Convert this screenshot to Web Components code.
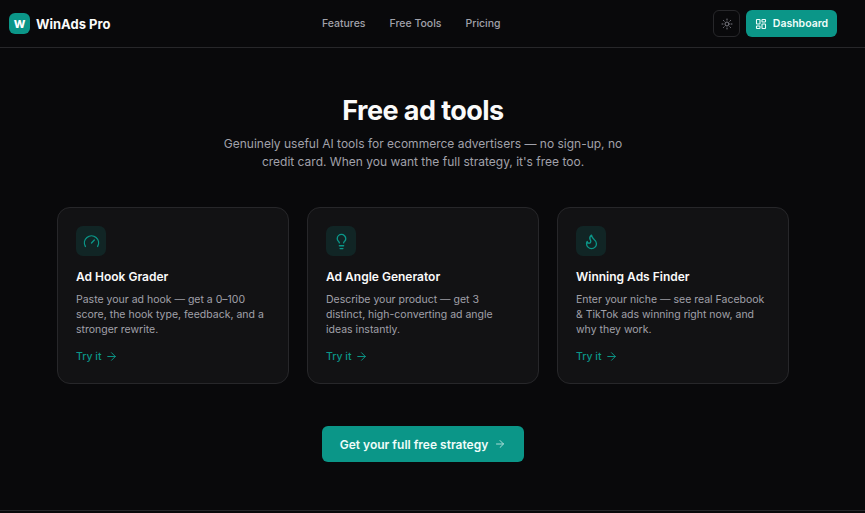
<!DOCTYPE html>
<html lang="en"><head><meta charset="utf-8"><title>WinAds Pro</title>
<style>
html,body{margin:0;padding:0;background:#09090b;height:513px;overflow:hidden}
body{font-family:Inter,"Liberation Sans",sans-serif;color:#fafafa}
</style></head><body>
<wa-header></wa-header>
<wa-main></wa-main>
<wa-footer></wa-footer>
<script>
const icons={
gauge:'<path d="m12 14 4-4"/><path d="M3.34 19a10 10 0 1 1 17.32 0"/>',
bulb:'<path d="M15 14c.2-1 .7-1.7 1.5-2.5 1-.9 1.5-2.2 1.5-3.5A6 6 0 0 0 6 8c0 1 .2 2.2 1.5 3.5.7.7 1.3 1.5 1.5 2.5"/><path d="M9 18h6"/><path d="M10 22h4"/>',
flame:'<path d="M8.5 14.5A2.5 2.5 0 0 0 11 12c0-1.38-.5-2-1-3-1.072-2.143-.224-4.054 2-6 .5 2.5 2 4.9 4 6.5 2 1.6 3 3.5 3 5.5a7 7 0 1 1-14 0c0-1.153.433-2.294 1-3a2.5 2.5 0 0 0 2.5 2.5z"/>',
arrow:'<path d="M5 12h14"/><path d="m12 5 7 7-7 7"/>',
sun:'<circle cx="12" cy="12" r="4"/><path d="M12 2v2"/><path d="M12 20v2"/><path d="m4.93 4.93 1.41 1.41"/><path d="m17.66 17.66 1.41 1.41"/><path d="M2 12h2"/><path d="M20 12h2"/><path d="m6.34 17.66-1.41 1.41"/><path d="m19.07 4.93-1.41 1.41"/>',
dash:'<rect width="7" height="9" x="3" y="3" rx="1"/><rect width="7" height="5" x="14" y="3" rx="1"/><rect width="7" height="9" x="14" y="12" rx="1"/><rect width="7" height="5" x="3" y="16" rx="1"/>'
};
const svg=(n,s,w=2)=>`<svg xmlns="http://www.w3.org/2000/svg" width="${s}" height="${s}" viewBox="0 0 24 24" fill="none" stroke="currentColor" stroke-width="${w}" stroke-linecap="round" stroke-linejoin="round" aria-hidden="true">${icons[n]}</svg>`;
const TEAL='#0b9688';

class WaHeader extends HTMLElement{constructor(){super();this.attachShadow({mode:'open'}).innerHTML=`<style>
:host{display:flex;align-items:center;justify-content:space-between;box-sizing:border-box;height:48px;padding:0 28px 0 9px;border-bottom:1px solid #27272a;background:#09090b}
.brand{display:flex;align-items:center;gap:6px;font-weight:700;font-size:13px;line-height:16px;color:#fafafa}
.logo{width:21px;height:21px;border-radius:6px;background:${TEAL};display:grid;place-items:center;font-size:11px;font-weight:800;color:#fff}
nav{display:flex;gap:24px;font-size:10.5px;line-height:14px;font-weight:500;color:#a1a1aa;margin-left:-1px}
.right{display:flex;align-items:center;gap:6px}
.theme{box-sizing:border-box;width:27px;height:27px;border:1px solid #27272a;border-radius:6px;display:grid;place-items:center;color:#8a8a93}
.dash{box-sizing:border-box;height:27px;width:91px;border-radius:6px;background:${TEAL};color:#f0fdfa;display:flex;align-items:center;justify-content:center;gap:6px;font-size:10.5px;font-weight:600}
svg{display:block}
</style>
<div class="brand"><span class="logo">W</span><span>WinAds Pro</span></div>
<nav><span>Features</span><span>Free Tools</span><span>Pricing</span></nav>
<div class="right"><span class="theme">${svg('sun',12,1.75)}</span><span class="dash">${svg('dash',12,2.2)}<span>Dashboard</span></span></div>`}}
customElements.define('wa-header',WaHeader);

class WaCard extends HTMLElement{constructor(){super();this.attachShadow({mode:'open'}).innerHTML=`<style>
:host{display:flex;flex-direction:column;align-items:flex-start;box-sizing:border-box;height:177px;padding:18px;border:1px solid #27272a;border-radius:13px;background:#121214}
.ic{width:30px;height:30px;border-radius:7px;background:rgba(13,148,136,.15);display:grid;place-items:center;color:${TEAL};margin-bottom:13px}
h3{margin:0 0 7px;font-size:12px;line-height:16px;font-weight:600;color:#fafafa}
p{margin:0 0 12px;font-size:10.5px;line-height:15px;color:#a1a1aa}
a{display:flex;align-items:center;gap:3px;font-size:10.5px;line-height:15px;font-weight:500;color:${TEAL}}
svg{display:block}
</style>
<div class="ic">${svg(this.getAttribute('icon'),17,1.9)}</div>
<h3>${this.getAttribute('heading')}</h3>
<p><slot></slot></p>
<a>Try it ${svg('arrow',13,1.8)}</a>`}}
customElements.define('wa-card',WaCard);

class WaMain extends HTMLElement{constructor(){super();this.attachShadow({mode:'open'}).innerHTML=`<style>
:host{display:block;box-sizing:border-box;height:462px;width:846px;padding-top:48px}
.top{display:flex;flex-direction:column;align-items:center;text-align:center}
h1{margin:0 0 9px;font-size:27px;line-height:30px;font-weight:700;color:#fafafa;letter-spacing:-.55px}
.sub{margin:0;width:420px;font-size:12px;line-height:18px;color:#a1a1aa}
.grid{display:grid;grid-template-columns:repeat(3,232px);gap:18px;justify-content:center;margin-top:36px}
.cta{display:flex;justify-content:center;margin-top:42px}
.btn{box-sizing:border-box;width:202px;height:36px;border-radius:6px;background:${TEAL};color:#f0fdfa;display:flex;align-items:center;justify-content:center;gap:6px;font-size:12px;font-weight:600}
.btn svg{opacity:.7}
</style>
<div class="top"><h1>Free ad tools</h1>
<p class="sub">Genuinely useful AI tools for ecommerce advertisers — no sign-up, no credit card. When you want the full strategy, it's free too.</p></div>
<div class="grid">
<wa-card icon="gauge" heading="Ad Hook Grader">Paste your ad hook — get a 0–100 score, the hook type, feedback, and a stronger rewrite.</wa-card>
<wa-card icon="bulb" heading="Ad Angle Generator">Describe your product — get 3 distinct, high-converting ad angle ideas instantly.</wa-card>
<wa-card icon="flame" heading="Winning Ads Finder">Enter your niche — see real Facebook &amp; TikTok ads winning right now, and why they work.</wa-card>
</div>
<div class="cta"><span class="btn">Get your full free strategy ${svg('arrow',12)}</span></div>`}}
customElements.define('wa-main',WaMain);

class WaFooter extends HTMLElement{constructor(){super();this.attachShadow({mode:'open'}).innerHTML=`<style>:host{display:block;height:3px;border-top:1px solid #27272a;box-sizing:border-box}</style>`}}
customElements.define('wa-footer',WaFooter);
</script>
</body></html>
